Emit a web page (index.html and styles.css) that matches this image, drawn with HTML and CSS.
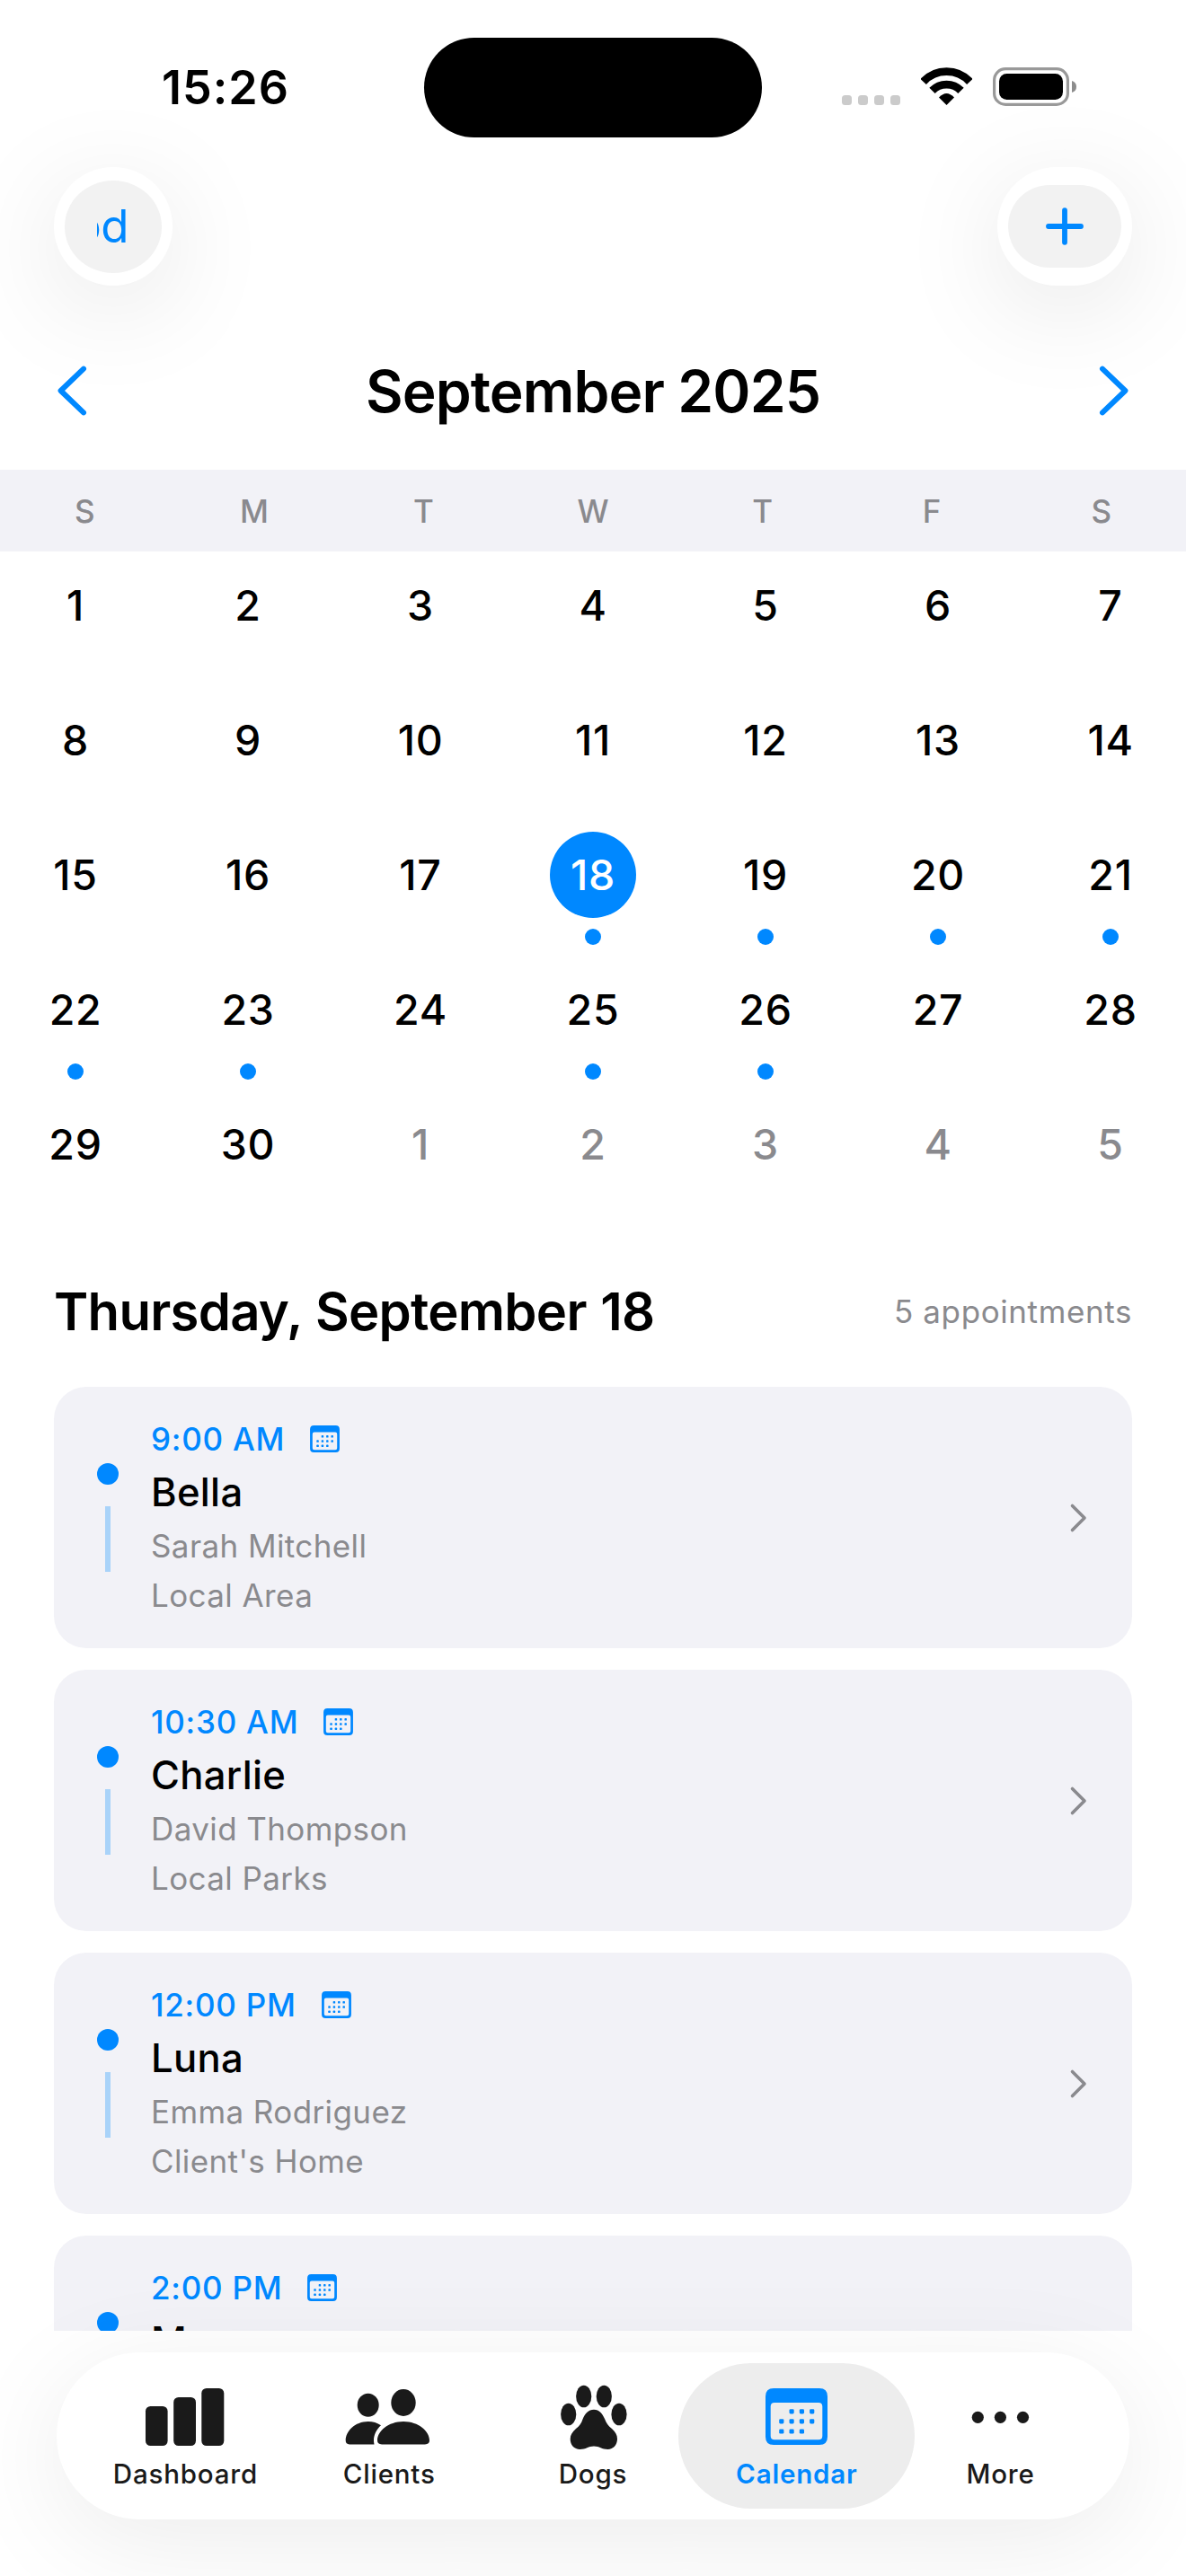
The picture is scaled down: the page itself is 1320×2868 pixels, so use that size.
FILE: index.html
```html
<!DOCTYPE html>
<html lang="en">
<head>
<meta charset="utf-8">
<title>Calendar</title>
<link rel="stylesheet" href="styles.css">
</head>
<body>
<svg class="defs" aria-hidden="true">
  <symbol id="calendar" viewBox="0 0 69 63">
    <path fill-rule="evenodd" d="M9 0H60Q69 0 69 9V54Q69 63 60 63H9Q0 63 0 54V9Q0 0 9 0ZM10 16Q5.7 16 5.7 20.300V53Q5.700 57.300 10 57.300H59Q63.300 57.300 63.300 53V20.300Q63.300 16 59 16Z"/>
    <g>
      <rect x="26.500" y="23.200" width="5.200" height="5.200" rx="1.300"/><rect x="37.800" y="23.200" width="5.200" height="5.200" rx="1.300"/><rect x="49.100" y="23.200" width="5.200" height="5.200" rx="1.300"/>
      <rect x="15.200" y="34.200" width="5.200" height="5.200" rx="1.300"/><rect x="26.500" y="34.200" width="5.200" height="5.200" rx="1.300"/><rect x="37.800" y="34.200" width="5.200" height="5.200" rx="1.300"/><rect x="49.100" y="34.200" width="5.200" height="5.200" rx="1.300"/>
      <rect x="15.200" y="45.400" width="5.200" height="5.200" rx="1.300"/><rect x="26.500" y="45.400" width="5.200" height="5.200" rx="1.300"/><rect x="37.800" y="45.400" width="5.200" height="5.200" rx="1.300"/>
    </g>
  </symbol>
  <symbol id="disclosure" viewBox="0 0 24 36">
    <path d="M5.500 4.500L19 18L5.500 31.500" fill="none" stroke="#8a8a8e" stroke-width="3.600" stroke-linecap="round" stroke-linejoin="round"/>
  </symbol>
</svg>
<div class="app">
  <header class="status">
    <div class="clock">15:26</div>
    <div class="island"></div>
    <div class="indicators">
      <svg width="65" height="44" viewBox="0 0 65 44" fill="#cbcbcb"><rect y="31" width="11" height="11" rx="3.500"/><rect x="18" y="31" width="11" height="11" rx="3.500"/><rect x="36" y="31" width="11" height="11" rx="3.500"/><rect x="54" y="31" width="11" height="11" rx="3.500"/></svg>
      <svg width="57" height="44" viewBox="0 0 57 44"><path d="M2.700 15.900A35.300 35.300 0 0 1 54.300 15.900M12.500 25.900A22.200 22.200 0 0 1 44.500 25.900" fill="none" stroke="#000" stroke-width="8.800"/><path d="M20 33.500Q28.500 24.500 37 33.500L28.500 42Z"/></svg>
      <svg width="93" height="44" viewBox="0 0 93 44"><rect x="1.600" y="1.600" width="81.800" height="39.800" rx="12.500" fill="none" stroke="#999" stroke-width="3.200"/><rect x="7" y="7" width="71" height="29" rx="8.500"/><path d="M88 15Q93 16.500 93 21.500T88 28Z" fill="#8c8c8c"/></svg>
    </div>
  </header>
  <nav class="toolbar">
    <button class="glass"><span class="today"><span>od</span></span></button>
    <button class="glass glass-wide"><span class="add"><svg width="44" height="44" viewBox="0 0 44 44"><path d="M22 4.200V39.800M4 22H40" stroke="#0088ff" stroke-width="5.800" stroke-linecap="round"/></svg></span></button>
  </nav>
  <main class="content">
    <section class="month">
      <svg width="40" height="60" viewBox="0 0 40 60"><path d="M33 4.600L7.600 29L33 53.400"/></svg>
      <h1>September 2025</h1>
      <svg width="40" height="60" viewBox="0 0 40 60"><path d="M7 4.600L32.400 29L7 53.400"/></svg>
    </section>
    <div class="weekdays"><span>S</span><span>M</span><span>T</span><span>W</span><span>T</span><span>F</span><span>S</span></div>
    <div class="days">
      <div class="day">1</div><div class="day">2</div><div class="day">3</div><div class="day">4</div><div class="day">5</div><div class="day">6</div><div class="day">7</div>
      <div class="day">8</div><div class="day">9</div><div class="day">10</div><div class="day">11</div><div class="day">12</div><div class="day">13</div><div class="day">14</div>
      <div class="day">15</div><div class="day">16</div><div class="day">17</div><div class="day selected busy">18</div><div class="day busy">19</div><div class="day busy">20</div><div class="day busy">21</div>
      <div class="day busy">22</div><div class="day busy">23</div><div class="day">24</div><div class="day busy">25</div><div class="day busy">26</div><div class="day">27</div><div class="day">28</div>
      <div class="day">29</div><div class="day">30</div><div class="day outside">1</div><div class="day outside">2</div><div class="day outside">3</div><div class="day outside">4</div><div class="day outside">5</div>
    </div>
    <div class="agenda-head"><h2>Thursday, September 18</h2><span>5 appointments</span></div>
    <div class="agenda">
      <article class="card">
        <div class="marker"></div>
        <div class="info"><div class="time">9:00 AM<svg><use href="#calendar"/></svg></div><div class="name">Bella</div><div class="meta">Sarah Mitchell</div><div class="meta">Local Area</div></div>
        <svg class="go"><use href="#disclosure"/></svg>
      </article>
      <article class="card">
        <div class="marker"></div>
        <div class="info"><div class="time">10:30 AM<svg><use href="#calendar"/></svg></div><div class="name">Charlie</div><div class="meta">David Thompson</div><div class="meta">Local Parks</div></div>
        <svg class="go"><use href="#disclosure"/></svg>
      </article>
      <article class="card">
        <div class="marker"></div>
        <div class="info"><div class="time">12:00 PM<svg><use href="#calendar"/></svg></div><div class="name">Luna</div><div class="meta">Emma Rodriguez</div><div class="meta">Client's Home</div></div>
        <svg class="go"><use href="#disclosure"/></svg>
      </article>
      <article class="card">
        <div class="marker"></div>
        <div class="info"><div class="time">2:00 PM<svg><use href="#calendar"/></svg></div><div class="name">Max</div></div>
      </article>
    </div>
  </main>
  <footer class="dock">
    <nav class="tabs">
      <a class="tab"><svg viewBox="0 0 100 72"><rect x="6" y="25" width="24.600" height="44" rx="5.500"/><rect x="37.200" y="15" width="24.800" height="54" rx="5.500"/><rect x="68.300" y="5" width="25" height="64" rx="5.500"/></svg>Dashboard</a>
      <a class="tab"><svg viewBox="0 0 100 72"><ellipse cx="26.700" cy="23.700" rx="12" ry="13"/><ellipse cx="66" cy="21" rx="13.700" ry="15"/><path d="M37 63C37 53 49 42 66 42S95 53 95 63Q95 67.400 90 67.400H42Q37 67.400 37 63ZM1.700 63C1.700 53 12 42 26.700 42C32 42 37 43.500 41 46.300C36 51 33 57 33 63Q33 65.500 33.500 67.400H6Q1.700 67.400 1.700 63Z"/></svg>Clients</a>
      <a class="tab"><svg viewBox="0 0 100 72"><ellipse cx="22.700" cy="34" rx="8.600" ry="12.300"/><ellipse cx="39.700" cy="14" rx="8.600" ry="12.300"/><ellipse cx="62.300" cy="14" rx="8.600" ry="12.300"/><ellipse cx="79" cy="34" rx="8.600" ry="12.300"/><path d="M51 28.700C57 28.700 60.500 33 63 39C65 44 67 47 71 50C75 53.500 77 57 77 61.500C77 68 72.500 73 66.500 73C60 73 57 69.500 51 69.500C45 69.500 42 73 35.500 73C29 73 24.700 68 24.700 61.500C24.700 57 27 53.500 31 50C35 47 37 44 38.700 39C41 33 45 28.700 51 28.700Z"/></svg>Dogs</a>
      <a class="tab active"><svg viewBox="0 0 100 72"><use href="#calendar" x="15" y="5" width="69" height="63"/></svg>Calendar</a>
      <a class="tab"><svg viewBox="0 0 100 72"><circle cx="24.300" cy="37.300" r="6.600"/><circle cx="49.400" cy="37.300" r="6.600"/><circle cx="74.500" cy="37.300" r="6.600"/></svg>More</a>
    </nav>
  </footer>
</div>
</body>
</html>
```
FILE: styles.css
```css
* { box-sizing: border-box; }
html, body { margin: 0; }
body { background: #fff; color: #000; font-family: Inter, "Liberation Sans", sans-serif; }
svg { display: block; flex: none; }
.defs { width: 0; height: 0; position: absolute; }

.app { width: 1320px; height: 2868px; display: flex; flex-direction: column; overflow: hidden; }

/* Status bar */
.status { height: 186px; padding-top: 8px; display: grid; grid-template-columns: 472px 376px 472px; align-items: center; flex: none; }
.clock { padding: 1px 0 0 180px; font-size: 52px; font-weight: 600; letter-spacing: 1px; }
.island { height: 111px; border-radius: 56px; background: #000; }
.indicators { display: flex; justify-content: flex-end; gap: 23px; padding-right: 122px; }

/* Floating toolbar buttons */
.toolbar { display: flex; justify-content: space-between; padding: 0 60px; height: 132px; flex: none; position: relative; }
.glass { width: 132px; height: 132px; border: 0; padding: 0; border-radius: 66px; background: #fff; box-shadow: 0 24px 120px rgba(0, 0, 0, .1); display: flex; align-items: center; justify-content: center; font-family: inherit; }
.glass-wide { width: 150px; }
.today { width: 108px; height: 103px; border-radius: 54px / 51.5px; background: #f2f2f2; display: flex; align-items: center; padding: 0 36px; }
.today span { width: 36px; padding-right: 1px; overflow: hidden; display: flex; justify-content: flex-end; font-size: 51px; line-height: 64px; letter-spacing: -.5px; color: #0088ff; }
.add { width: 126px; height: 92px; border-radius: 46px; background: #f2f2f2; display: flex; align-items: center; justify-content: center; }

.content { flex: 1; min-height: 0; overflow: hidden; position: relative; }

/* Month navigation */
.month { margin-top: 78px; height: 80px; padding: 0 60px; display: flex; align-items: center; justify-content: space-between; }
.month svg { fill: none; stroke: #0088ff; stroke-width: 6px; stroke-linecap: round; stroke-linejoin: round; }
h1 { margin: 0; font-size: 64px; line-height: 80px; font-weight: 600; letter-spacing: -.88px; }

.weekdays { margin-top: 47px; height: 91px; background: #f2f2f7; color: #8a8a8e; display: grid; grid-template-columns: repeat(7, 1fr); align-items: center; text-align: center; font-size: 35px; font-weight: 500; }

.days { padding: 12px 36px 0; display: grid; grid-template-columns: repeat(7, 96px); justify-content: space-between; grid-auto-rows: 126px; row-gap: 24px; }
.day { display: flex; flex-direction: column; align-items: center; position: relative; height: 96px; line-height: 96px; border-radius: 48px; font-size: 46.5px; font-weight: 500; letter-spacing: .7px; }
.day.outside { color: #8a8a8e; }
.day.selected { background: #0088ff; color: #fff; }
.day.busy::after { content: ""; flex: none; width: 18px; height: 18px; margin-top: 12px; border-radius: 50%; background: #0088ff; }

/* Agenda */
.agenda-head { margin-top: 72px; padding: 0 60px; height: 72px; display: flex; align-items: center; justify-content: space-between; }
h2 { margin: 0; font-size: 58px; line-height: 72px; font-weight: 600; letter-spacing: -.7px; word-spacing: 1.5px; }
.agenda-head span { font-size: 35px; color: #8a8a8e; letter-spacing: .6px; }
.agenda { margin-top: 48px; padding: 0 60px; display: flex; flex-direction: column; gap: 24px; }
.card { height: 291px; flex: none; border-radius: 36px; background: #f2f2f7; padding: 36px 48px; display: flex; gap: 36px; }
.marker { width: 24px; align-self: center; display: flex; flex-direction: column; align-items: center; gap: 24px; }
.marker::before { content: ""; width: 24px; height: 24px; border-radius: 50%; background: #0088ff; }
.marker::after { content: ""; width: 6px; height: 73px; background: #a9d3f9; }
.info { flex: 1; display: flex; flex-direction: column; gap: 12px; }
.time { height: 43px; display: flex; align-items: center; gap: 28px; font-size: 35px; line-height: 42px; font-weight: 500; letter-spacing: .75px; color: #0088ff; }
.time svg { width: 33px; height: 30px; fill: #0088ff; }
.name { font-size: 43.6px; line-height: 53px; font-weight: 500; letter-spacing: .3px; }
.meta { font-size: 35px; line-height: 43px; letter-spacing: .4px; color: #8a8a8e; }
.go { width: 24px; height: 36px; align-self: center; }

/* Tab bar */
.dock { flex: none; height: 273px; padding: 24px 63px 0; position: relative; }
.tabs { height: 186px; padding: 12px 30px; border-radius: 93px; background: #fff; box-shadow: 0 24px 120px rgba(0, 0, 0, .08); display: grid; grid-template-columns: repeat(5, 1fr); }
.tab { height: 162px; padding-top: 23px; display: flex; flex-direction: column; align-items: center; gap: 10px; color: #1a1a1a; fill: #1a1a1a; font-size: 29.5px; line-height: 36px; font-weight: 500; letter-spacing: .8px; }
.tab svg { width: 100px; height: 72px; overflow: visible; }
.tab.active { margin: 0 -18px; border-radius: 81px; background: #ededed; color: #0088ff; fill: #0088ff; font-weight: 600; }
```
